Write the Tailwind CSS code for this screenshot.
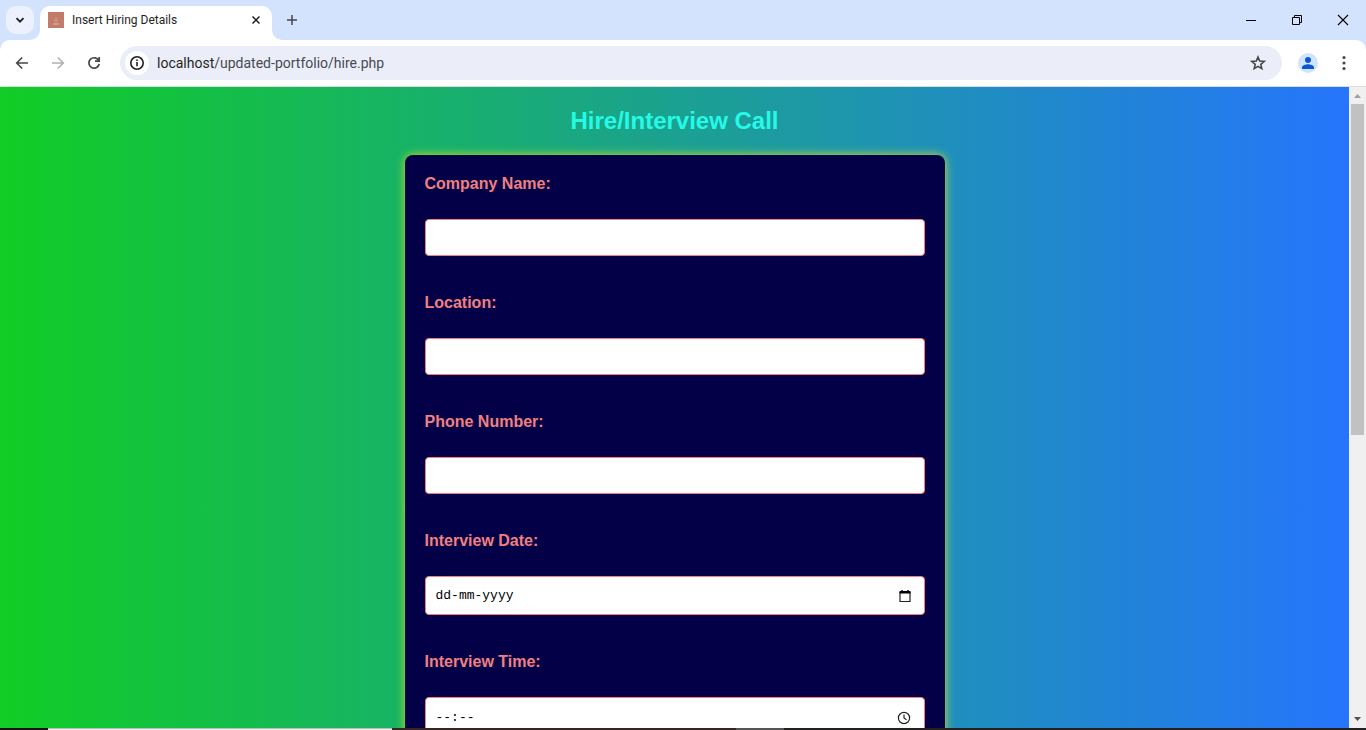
<!DOCTYPE html>
<html lang="en">
<head>
<meta charset="utf-8">
<meta name="viewport" content="width=device-width, initial-scale=1">
<title>Insert Hiring Details</title>
<script src="https://cdn.jsdelivr.net/npm/@tailwindcss/browser@4"></script>
</head>
<body class="flex h-screen flex-col overflow-hidden bg-[#d3e3fd] font-[Roboto,'Noto_Sans',sans-serif]">

<!-- Tab strip -->
<header class="flex h-10 shrink-0 items-end pl-1.5">
  <button aria-label="Search tabs" class="mb-1.5 mr-1.5 flex size-7 items-center justify-center rounded-[10px] bg-[#ebf1fd]">
    <svg class="size-7" viewBox="0 0 28 28" fill="none" stroke="#1f1f1f" stroke-width="1.800"><path d="M10.500 12.200 14 15.700 17.500 12.200"/></svg>
  </button>
  <div class="relative flex h-[34px] w-[232px] items-center rounded-t-[10px] bg-white pb-1.5 pl-2 pr-2">
    <svg class="absolute -left-2.5 bottom-0 size-2.5" viewBox="0 0 10 10" fill="#fff"><path d="M10 0V10H0A10 10 0 0 0 10 0Z"/></svg>
    <svg class="absolute -right-2.5 bottom-0 size-2.5" viewBox="0 0 10 10" fill="#fff"><path d="M0 0V10H10A10 10 0 0 1 0 0Z"/></svg>
    <svg class="mr-2 size-4" viewBox="0 0 16 16"><path fill="#c27b68" d="M0 0h16v16H0z"/><path d="M8 5v4M6.500 6.500v3h3v-3" stroke="#cf9180" fill="none"/><path d="M5 12h6" stroke="#e4bdb2"/></svg>
    <span class="grow text-[12px] leading-4 text-[#1f1f1f]">Insert Hiring Details</span>
    <button aria-label="Close tab" class="flex size-4 items-center justify-center">
      <svg class="size-4" viewBox="0 0 16 16" stroke="#1f1f1f" stroke-width="1.500"><path d="M4.500 4.500l7 7M11.500 4.500l-7 7"/></svg>
    </button>
  </div>
  <button aria-label="New tab" class="mb-1.5 ml-1.5 size-7">
    <svg class="size-7" viewBox="0 0 28 28" stroke="#474747" stroke-width="1.500"><path d="M14 9v10M9 14h10"/></svg>
  </button>
  <div class="ml-auto flex h-10">
    <button aria-label="Minimize" class="flex w-[46px] items-center justify-center"><svg class="size-4" viewBox="0 0 16 16" stroke="#000"><path d="M3 8.500h10"/></svg></button>
    <button aria-label="Restore" class="flex w-[46px] items-center justify-center"><svg class="size-4" viewBox="0 0 16 16" fill="none" stroke="#000"><path d="M3.500 5.500h7v7h-7zM5.500 5.500v-2h7v7h-2"/></svg></button>
    <button aria-label="Close" class="flex w-[46px] items-center justify-center"><svg class="size-4" viewBox="0 0 16 16" stroke="#000" stroke-width="1.100"><path d="M3 3l10 10M13 3L3 13"/></svg></button>
  </div>
</header>

<!-- Toolbar -->
<nav class="flex h-[47px] shrink-0 items-center rounded-t-[10px] border-b border-[#dcdcdc] bg-white pl-2.5 pr-2.5">
  <button aria-label="Back" class="mr-3 size-6"><svg class="size-6" viewBox="0 0 24 24" fill="none" stroke="#474747" stroke-width="1.600"><path d="M18 12H7M12.200 6.500 6.700 12l5.500 5.500"/></svg></button>
  <button aria-label="Forward" class="mr-3 size-6"><svg class="size-6" viewBox="0 0 24 24" fill="none" stroke="#b0b0b0" stroke-width="1.600"><path d="M6 12h11M11.800 6.500l5.500 5.500-5.500 5.500"/></svg></button>
  <button aria-label="Reload" class="mr-3.5 size-6"><svg class="size-6" viewBox="0 0 24 24" fill="none" stroke="#474747" stroke-width="1.700"><path d="M16.800 9.700A5.200 5.200 0 1 0 17.200 13"/><path d="M17.200 6v4.200H13"/></svg></button>
  <div class="flex h-[34px] grow items-center rounded-full bg-[#ebeef8] pl-[5px] pr-3">
    <button aria-label="View site information" class="mr-2 flex size-6 items-center justify-center rounded-full bg-white"><svg class="size-6" viewBox="0 0 24 24" fill="none" stroke="#1f1f1f" stroke-width="1.600"><circle cx="12" cy="12" r="6.200"/><path d="M12 11v4.300M12 8.400v1.700"/></svg></button>
    <a href="#" class="grow text-[14px] leading-5 text-[#474a50]"><span class="text-[#1f1f1f]">localhost</span>/updated-portfolio/hire.php</a>
    <button aria-label="Bookmark this tab" class="size-6"><svg class="size-6" viewBox="0 0 24 24" fill="none" stroke="#474747" stroke-width="1.600"><path d="M12 6l1.700 4.100 4.500.400-3.400 2.900 1 4.300-3.800-2.300-3.800 2.300 1-4.300-3.400-2.900 4.500-.400z"/></svg></button>
  </div>
  <button aria-label="Profile" class="ml-4 mr-3.5 size-5"><svg class="size-5" viewBox="0 0 20 20"><circle cx="10" cy="10" r="10" fill="#d3e3fd"/><circle cx="10" cy="7" r="3" fill="#0b57d0"/><path fill="#0b57d0" d="M4 16v-1.800c0-2 4-3 6-3s6 1 6 3V16z"/></svg></button>
  <button aria-label="Menu" class="size-6"><svg class="size-6" viewBox="0 0 24 24" fill="#474747"><circle cx="12" cy="6.500" r="1.600"/><circle cx="12" cy="12" r="1.600"/><circle cx="12" cy="17.500" r="1.600"/></svg></button>
</nav>

<!-- Page -->
<div class="flex min-h-0 grow">
  <main class="min-w-0 grow overflow-hidden bg-linear-to-r/srgb from-[#11cd25] to-[#2575fc] pt-5 font-['Liberation_Sans',Arial,sans-serif]">
    <h1 class="mb-[21px] text-center text-[24px] leading-[27px] font-bold text-[#25fae6]">Hire/Interview Call</h1>
    <form class="mx-auto flex max-w-[540px] flex-col gap-[38px] rounded-lg bg-[#040047] p-5 shadow-[0_0_10px_#c6e020]">
      <div class="flex flex-col gap-[26px]">
        <label for="company" class="text-[16px] leading-[18px] font-bold text-[#f08080]">Company Name:</label>
        <input id="company" type="text" class="h-[37px] w-full rounded border border-[#f08080] bg-white px-2.5">
      </div>
      <div class="flex flex-col gap-[26px]">
        <label for="location" class="text-[16px] leading-[18px] font-bold text-[#f08080]">Location:</label>
        <input id="location" type="text" class="h-[37px] w-full rounded border border-[#f08080] bg-white px-2.5">
      </div>
      <div class="flex flex-col gap-[26px]">
        <label for="phone" class="text-[16px] leading-[18px] font-bold text-[#f08080]">Phone Number:</label>
        <input id="phone" type="tel" class="h-[37px] w-full rounded border border-[#f08080] bg-white px-2.5">
      </div>
      <div class="flex flex-col gap-[26px]">
        <label for="date" class="text-[16px] leading-[18px] font-bold text-[#f08080]">Interview Date:</label>
        <div class="flex h-[39px] items-center rounded border border-[#f08080] bg-white pl-2.5 pr-3">
          <input id="date" type="text" placeholder="dd-mm-yyyy" class="min-w-0 grow font-['Liberation_Mono',monospace] text-[13px] leading-4 text-black outline-none placeholder:text-black">
          <button type="button" aria-label="Choose date" class="size-3.5"><svg class="size-3.5" viewBox="0 0 14 14"><path d="M2 3.500h10v9H2z" fill="none" stroke="#222" stroke-width="1.200"/><path d="M1.500 2h11v2.500h-11zM3.300 1h1.400v2H3.300zM9.300 1h1.400v2H9.300z"/></svg></button>
        </div>
      </div>
      <div class="flex flex-col gap-[26px]">
        <label for="time" class="text-[16px] leading-[18px] font-bold text-[#f08080]">Interview Time:</label>
        <div class="flex h-[41px] items-center rounded border border-[#f08080] bg-white pl-2.5 pr-[13px]">
          <input id="time" type="text" placeholder="--:--" class="min-w-0 grow font-['Liberation_Mono',monospace] text-[13px] leading-4 text-black outline-none placeholder:text-black">
          <button type="button" aria-label="Choose time" class="size-3.5"><svg class="size-3.5" viewBox="0 0 14 14" fill="none" stroke="#222" stroke-width="1.200"><circle cx="7" cy="7" r="5.600"/><path d="M7 3.500V7l2.500 1.700"/></svg></button>
        </div>
      </div>
    </form>
  </main>
  <!-- Scrollbar -->
  <div class="flex w-[17px] shrink-0 flex-col bg-[#f0f0f0]">
    <svg class="h-[17px] w-[17px] shrink-0" viewBox="0 0 17 17" fill="#a0a0a0"><path d="M5 11h7L8.500 7z"/></svg>
    <div class="grow px-0.5"><div class="h-6/11 bg-[#c1c1c1]"></div></div>
    <svg class="h-[17px] w-[17px] shrink-0" viewBox="0 0 17 17" fill="#505050"><path d="M5 6h7l-3.500 4z"/></svg>
  </div>
</div>

<!-- Taskbar edge -->
<footer class="flex h-0.5 shrink-0 bg-[#252020]">
  <div class="w-12 bg-[#181014]"></div>
  <div class="w-[344px] border-t border-[#bdbdbd] bg-[#f0f0f0]"></div>
  <div class="w-[344px] bg-[#35271f]"></div>
  <div class="w-12 bg-[#555]"></div>
</footer>
</body>
</html>
